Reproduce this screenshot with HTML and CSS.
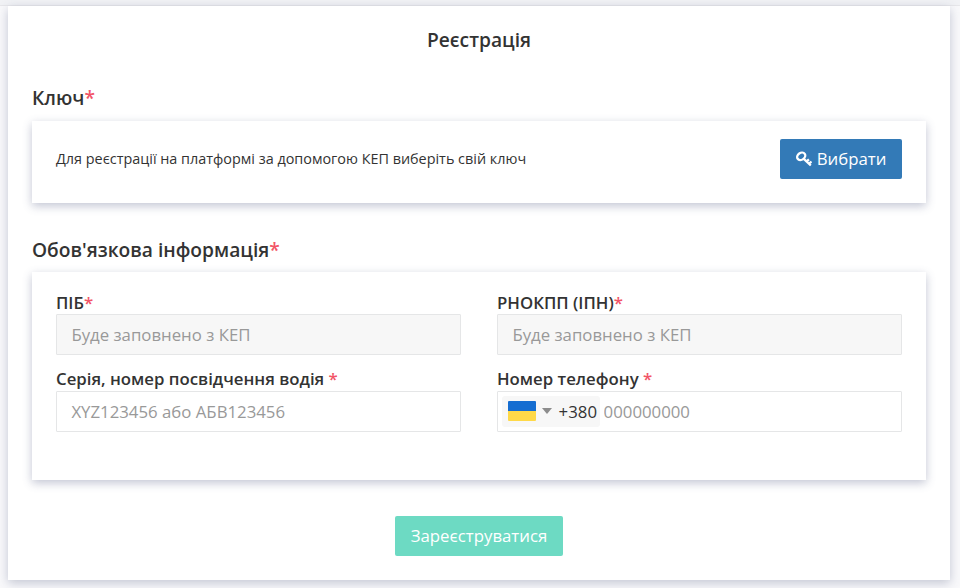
FILE: index.html
```html
<!DOCTYPE html>
<html lang="uk">
<head>
<meta charset="utf-8">
<title>Реєстрація</title>
<link rel="stylesheet" href="styles.css">
</head>
<body>
<main class="panel">
  <h1 class="title">Реєстрація</h1>
  <h2 class="heading">Ключ<span class="req">*</span></h2>
  <section class="card card-key">
    <p class="hint">Для реєстрації на платформі за допомогою КЕП виберіть свій ключ</p>
    <button class="btn btn-primary" type="button">
      <svg class="key" viewBox="0 0 16 16" width="16" height="16" fill="none" stroke="currentColor" stroke-width="2.3"><ellipse cx="5.200" cy="5.300" rx="4.300" ry="3.400" transform="rotate(-35 5.2 5.3)"/><path d="M7.300 7.300l7.500 7.200M10.700 10.300l2.200-2M13.200 12.600l2.300-2.100"/></svg>
      <span>Вибрати</span>
    </button>
  </section>
  <h2 class="heading heading-info">Обов'язкова інформація<span class="req">*</span></h2>
  <section class="card card-info">
    <div class="field"><label class="label" for="name">ПІБ<span class="req">*</span></label><input class="input" id="name" disabled placeholder="Буде заповнено з КЕП"></div>
    <div class="field"><label class="label" for="tax">РНОКПП (ІПН)<span class="req">*</span></label><input class="input" id="tax" disabled placeholder="Буде заповнено з КЕП"></div>
    <div class="field field-tall"><label class="label" for="licence">Серія, номер посвідчення водія <span class="req">*</span></label><input class="input" id="licence" placeholder="XYZ123456 або АБВ123456"></div>
    <div class="field field-tall"><label class="label" for="phone">Номер телефону <span class="req">*</span></label>
      <div class="phone"><span class="code"><i class="flag"></i><i class="caret"></i><span>+380</span></span><input class="phone-input" id="phone" placeholder="000000000"></div>
    </div>
  </section>
  <button class="btn btn-submit" type="button">Зареєструватися</button>
</main>
</body>
</html>
```
FILE: styles.css
```css
* { box-sizing: border-box; }
body { margin: 0; padding: 6px 10px 8px 8px; height: 588px; overflow: hidden; background: linear-gradient(#f1f2f5 5px, #e7e7ea 5px 6px, #f9f9fb 6px); color: #333; font: 16.8px/24px "Open Sans", sans-serif; }
.panel { height: 574px; padding: 20px 24px 24px; display: flex; flex-direction: column; background: #fff; box-shadow: 0 3px 10px rgba(70, 80, 120, .3); }
.title, .heading { margin: 0; font-size: 19.2px; line-height: 28px; font-weight: 600; }
.title { text-align: center; margin-bottom: 30px; }
.heading { margin-bottom: 9px; }
.req { color: #f25567; }
.card { background: #fff; box-shadow: 0 3px 9px rgba(70, 80, 120, .33); }
.card-key { height: 82px; padding: 18px 24px; display: flex; align-items: flex-start; justify-content: space-between; }
.hint { margin: 8px 0 0; font-size: 14.4px; }
.heading-info { margin-top: 33px; margin-bottom: 8px; }
.card-info { height: 208px; padding: 19px 24px; display: grid; grid-template-columns: 1fr 1fr; column-gap: 36px; row-gap: 12px; align-content: start; }
.field { display: flex; flex-direction: column; }
.label { line-height: 23px; font-weight: 600; }
.field-tall .label { margin-bottom: 1px; }
.input, .phone { height: 41px; border: 1px solid #e5e6e7; border-radius: 1px; background: #fff; font: inherit; }
.input { padding: 0 14.4px; width: 100%; }
.input:disabled { background: #f7f7f7; }
.input::placeholder, .phone-input::placeholder { color: #999; opacity: 1; }
.phone { display: flex; align-items: center; padding: 4px; }
.code { height: 31px; width: 98px; padding-left: 6px; display: flex; align-items: center; border-radius: 3px; background: #f7f7f7; }
.flag { width: 28px; height: 20px; margin-bottom: 2px; border-radius: 1px; background: linear-gradient(#156dd1 50%, #ffd948 50%); }
.caret { margin: 0 6.6px 2px 6px; border: 5px solid transparent; border-top: 6px solid #8c8c8c; border-bottom: 0; }
.phone-input { min-width: 0; flex: 1; border: 0; padding: 0 3.600px; font: inherit; }
.btn { height: 40px; border: 0; border-radius: 2px; color: #fff; font: inherit; display: flex; align-items: center; justify-content: center; }
.btn-primary { width: 122px; gap: 5px; background: #337ab7; }
.btn-submit { width: 168px; margin: 36px auto 0; background: #6ddac3; }
```
